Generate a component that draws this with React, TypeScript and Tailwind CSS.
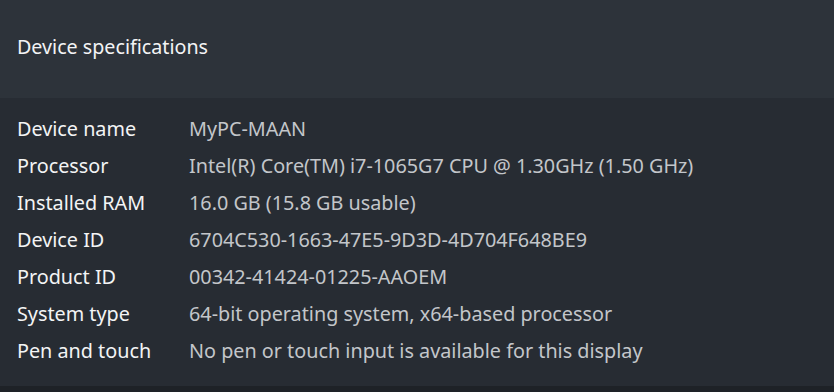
const specs = [
  { label: 'Device name', value: 'MyPC-MAAN' },
  { label: 'Processor', value: 'Intel(R) Core(TM) i7-1065G7 CPU @ 1.30GHz (1.50 GHz)' },
  { label: 'Installed RAM', value: '16.0 GB (15.8 GB usable)' },
  { label: 'Device ID', value: '6704C530-1663-47E5-9D3D-4D704F648BE9' },
  { label: 'Product ID', value: '00342-41424-01225-AAOEM' },
  { label: 'System type', value: '64-bit operating system, x64-based processor' },
  { label: 'Pen and touch', value: 'No pen or touch input is available for this display' },
]

export default function App() {
  return (
    <div className="flex h-[392px] w-[834px] flex-col bg-[#272c33] font-['Noto_Sans',sans-serif]">
      <div className="flex h-[98px] items-center bg-[#2d333a] px-[17px] pb-[4px]">
        <h2 className="text-[19.7px] text-[#f3f4f5]">Device specifications</h2>
      </div>
      <div className="flex flex-1 flex-col px-[17px] pt-[12px]">
        {specs.map((spec) => (
          <div key={spec.label} className="flex h-[37px] items-center text-[19.8px]">
            <span className="w-[172px] text-[#f3f4f5]">{spec.label}</span>
            <span className="text-[#c3c6ca]">{spec.value}</span>
          </div>
        ))}
      </div>
      <div className="h-[6px] bg-[#1e2227]" />
    </div>
  )
}
